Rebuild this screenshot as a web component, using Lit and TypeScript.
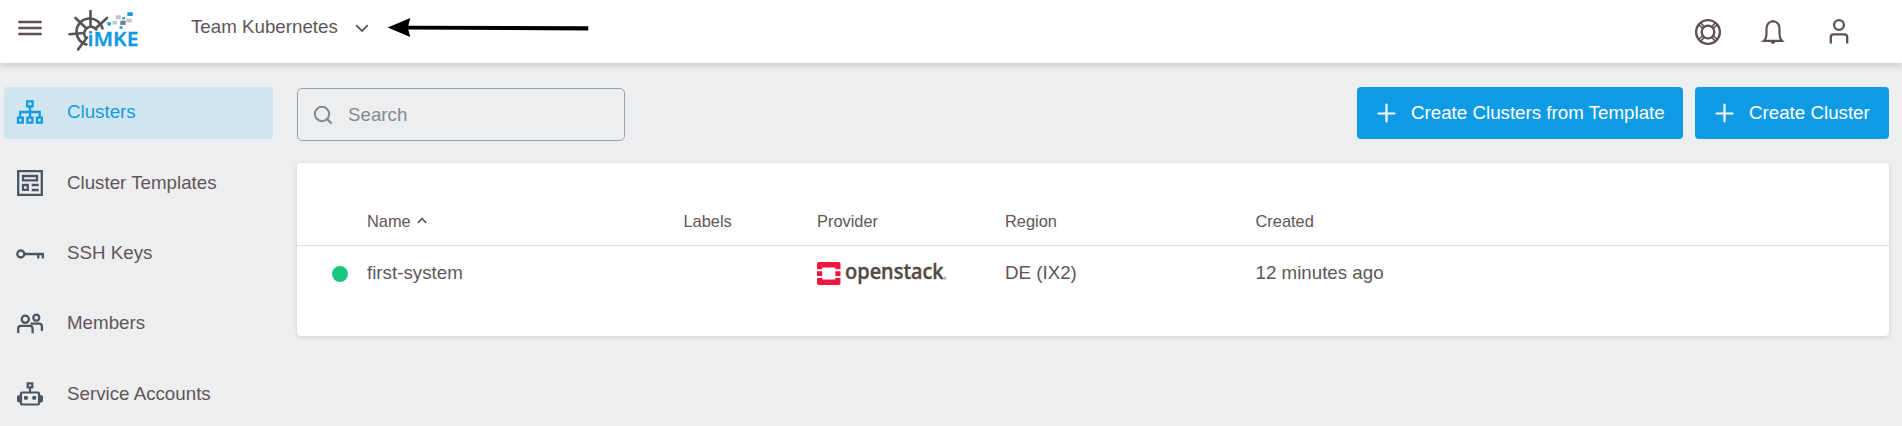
import { LitElement, html, css, svg } from "lit";
import { customElement } from "lit/decorators.js";

const sitemap = svg`<g fill="none" stroke="currentColor" stroke-width="2.300"><path d="M11.200 2.300h5.400v5h-5.400zM14 7.500v11M4.200 18.500v-5.500h19.500v5.500M2 18.700h4.800v5h-4.800zM11.400 18.700h5v5h-5zM21 18.700h4.900v5h-4.900z"/></g>`;
const template = svg`<g fill="none" stroke="currentColor" stroke-width="2.300"><path d="M2.200 2.200h23.600v23.600H2.200z"/><path d="M7 7h14v4.300H7zM7 16h4.800v4.800H7zM15.700 16h7M15.700 21h7"/></g>`;
const key = svg`<g fill="none" stroke="currentColor" stroke-width="2.300"><circle cx="4.800" cy="14" r="3.500"/><path d="M8.500 14h18.300v4.500M22.300 14v4.500"/></g>`;
const members = svg`<g fill="none" stroke="currentColor" stroke-width="2.300"><circle cx="9.300" cy="9.300" r="3.600"/><circle cx="20.300" cy="7.700" r="3"/><path d="M2.200 23v-4.500q0-2.700 2.700-2.700h9q2.700 0 2.700 2.700v4.700M14.500 13.700h8.700q2.700 0 2.700 2.800v4.500"/></g>`;
const robot = svg`<g fill="none" stroke="currentColor" stroke-width="2.200"><path d="M11.700 2.300h4.600v4h-4.600zM14 6.500v5M6 11.500h16q1 0 1 1v10q0 1-1 1H6q-1 0-1-1v-10q0-1 1-1z"/></g><g fill="currentColor"><path d="M1 16q0-2 3-2v7.500q-3 0-3-2zM27 16q0-2-3-2v7.500q3 0 3-2z"/><rect x="8" y="15" width="3.800" height="3.800" rx="1"/><rect x="16.300" y="15" width="3.800" height="3.800" rx="1"/></g>`;

const NAV = [
  { label: "Clusters", icon: sitemap, active: true },
  { label: "Cluster Templates", icon: template },
  { label: "SSH Keys", icon: key },
  { label: "Members", icon: members },
  { label: "Service Accounts", icon: robot },
];

const brand = html`<svg class="brand" width="80" height="48" viewBox="64 6 80 48">
  <g fill="none" stroke="#555" stroke-width="2.600" stroke-linecap="round">
    <path d="M86.500 44.500A13.200 13.200 0 1 1 102.500 28.500"/>
    <path d="M85.500 37.500A6.500 6.500 0 1 1 96.300 29.500"/>
    <path d="M90.500 11V26M75.500 18L86 28M107 18L95.500 28.500M69.500 34.200L84 33M78 49.500L87 37.500"/>
  </g>
  <g fill="#129ae2"><path d="M127.300 12.300h5.400v3.600h-5.400zM107.500 22.200h3.400v3.400h-3.400zM122.200 17.200h2.800v2h-2.800zM119.500 26.300h3v2.500h-3z"/></g>
  <g fill="#bfc5c8"><path d="M115.700 15.200h5v4h-5zM112.500 21h4.500v3.400h-4.500zM126.500 18.700h5.300v3.700h-5.300z"/></g>
  <path fill="#777d80" d="M120.300 20.700h5.300v4.200h-5.300z"/>
  <text x="87.500" y="45.800" font-family="Noto Sans, sans-serif" font-weight="600" font-size="20.500" textLength="51" lengthAdjust="spacingAndGlyphs" fill="#129ae2" stroke="#129ae2" stroke-width=".300">iMKE</text>
</svg>`;

const plus = html`<svg width="20" height="20" viewBox="0 0 20 20" fill="none" stroke="#fff" stroke-width="2.200" stroke-linecap="round"><path d="M9.500 1.500v17M1.500 10.500h16"/></svg>`;

@customElement("app-root")
export class AppRoot extends LitElement {
  static styles = css`
    :host { display: flex; flex-direction: column; height: 426px; overflow: hidden; background: #edeef0; color: #605558; font: 18.740px/24px "Liberation Sans", Arial, sans-serif; }
    svg { display: block; flex: none; }
    header { height: 63px; flex: none; display: flex; background: #fff; box-shadow: 0 2px 7px rgba(0,0,0,.17); z-index: 1; }
    .menu { margin: 20px 0 0 18px; }
    .brand { margin: 6px 0 0 22px; }
    .team { margin: 15px 0 0 47px; width: 148px; white-space: nowrap; }
    .chevron { margin: 24px 0 0 16px; }
    .arrow { margin: 16px 0 0 18px; }
    .tools { margin: 18px 49px 0 auto; display: flex; gap: 37px; }
    .tools svg:nth-child(-n+2) { margin-left: -1px; margin-right: 1px; }
    .body { display: flex; flex: 1; min-height: 0; }
    nav { width: 269px; margin: 24px 24px 0 4px; display: flex; flex-direction: column; gap: 18.500px; flex: none; }
    .item { height: 52px; flex: none; display: flex; align-items: center; gap: 23px; padding-left: 12px; border-radius: 3px; color: #4c565e; }
    .item svg { margin-top: -1px; }
    .item span { color: #605558; margin-top: -2px; }
    .item:nth-child(4) span { margin-top: -3px; }
    .active { background: #d1e5ee; color: #129ae2; }
    .active svg { margin-top: 0; }
    .item.active span { color: #129ae2; }
    main { flex: 1; margin: 24px 13px 0 0; min-width: 0; }
    .bar { display: flex; justify-content: space-between; }
    .search { width: 328px; height: 53px; margin-top: 1px; box-sizing: border-box; border: 1px solid #9ba1ab; border-radius: 5px; display: flex; align-items: center; padding-left: 14.500px; gap: 15.500px; color: #838b94; }
    .buttons { display: flex; gap: 12px; }
    .btn { height: 52px; box-sizing: border-box; background: #0f9be3; color: #fff; border-radius: 4px; display: flex; align-items: center; padding-left: 20px; gap: 14px; white-space: nowrap; }
    .btn span { margin-top: -1px; }
    .wide { width: 326px; }
    .narrow { width: 194px; }
    .card { height: 173px; box-sizing: border-box; margin-top: 22px; padding-top: 35px; background: #fff; border-radius: 4px; box-shadow: 0 1px 4px rgba(0,0,0,.15); }
    .row { display: grid; grid-template-columns: 35px 316.500px 133.500px 188px 250.500px 1fr; padding-left: 35px; align-items: center; height: 54px; }
    .head { height: 47px; border-bottom: 1px solid #dfe1e3; font-size: 16.400px; }
    .head > * { margin-top: -2px; }
    .name { display: flex; align-items: center; gap: 6px; }
    .dot { width: 16px; height: 16px; border-radius: 50%; background: #1cc680; margin-top: 1px; }
    .provider { margin-top: 2px; }
  `;

  render() {
    return html`
      <header>
        <svg class="menu" width="24" height="16" viewBox="0 0 24 16"><path d="M1.200 2h21.600M1.200 8h21.600M1.200 14h21.600" stroke="#5d5155" stroke-width="2.300" stroke-linecap="round"/></svg>
        ${brand}
        <div class="team">Team Kubernetes</div>
        <svg class="chevron" width="14" height="9" viewBox="0 0 14 9"><path d="M1.200 1.200L7 7L12.800 1.200" fill="none" stroke="#5d5155" stroke-width="1.800"/></svg>
        <svg class="arrow" width="202" height="24" viewBox="387 16 202 24"><path d="M387.700 27.600L410.300 18L408.300 25.700L588.300 26.300V30.500L408.300 29.400L410.300 37z" fill="#000"/></svg>
        <div class="tools">
          <svg width="28" height="28" viewBox="0 0 28 28" fill="none" stroke="#5d5155" stroke-width="2.300"><circle cx="14" cy="14" r="11.900"/><circle cx="14" cy="14" r="6.300"/><path d="M4.600 6.600L9 10.500M6.600 4.600L10.500 9M21.400 4.600L17.500 9M23.400 6.600L19 10.500M4.600 21.400L9 17.500M6.600 23.400L10.500 19M21.400 23.400L17.500 19M23.400 21.400L19 17.500" stroke-width="1.600"/></svg>
          <svg width="28" height="28" viewBox="0 0 28 28"><path d="M5 22.800Q7.500 20.500 7.500 15V10.500Q8 3.500 14 3.500T20.500 10.500V15Q20.500 20.500 23 22.800z" fill="none" stroke="#5d5155" stroke-width="2.200"/><path d="M11.300 3.500Q14 .500 16.700 3.500zM11.300 23.500Q14 28.500 16.700 23.500z" fill="#5d5155"/></svg>
          <svg width="28" height="28" viewBox="0 0 28 28" fill="none" stroke="#5d5155" stroke-width="2.300"><circle cx="14" cy="7" r="4.900"/><path d="M5.800 25.500V19Q5.800 16.300 8.500 16.300H19.500Q22.200 16.300 22.200 19V25.500"/></svg>
        </div>
      </header>
      <div class="body">
        <nav>
          ${NAV.map((n) => html`<div class="item ${n.active ? "active" : ""}"><svg width="28" height="28" viewBox="0 0 28 28">${n.icon}</svg><span>${n.label}</span></div>`)}
        </nav>
        <main>
          <div class="bar">
            <div class="search">
              <svg width="20" height="20" viewBox="0 0 20 20" fill="none" stroke="currentColor" stroke-width="2.100"><circle cx="9" cy="9" r="7.200"/><path d="M14 14L18.500 18.500" stroke-width="2.400"/></svg>
              <span>Search</span>
            </div>
            <div class="buttons">
              <div class="btn wide">${plus}<span>Create Clusters from Template</span></div>
              <div class="btn narrow">${plus}<span>Create Cluster</span></div>
            </div>
          </div>
          <section class="card">
            <div class="row head">
              <span></span>
              <span class="name">Name <svg width="10" height="7" viewBox="0 0 10 7"><path d="M.800 6L5 1.500L9.200 6" fill="none" stroke="#5d5155" stroke-width="1.600"/></svg></span>
              <span>Labels</span><span>Provider</span><span>Region</span><span>Created</span>
            </div>
            <div class="row">
              <span class="dot"></span><span>first-system</span><span></span>
              <svg class="provider" width="132" height="28" viewBox="817 260 132 28">
                <path fill="#ee1742" d="M819 262H838.500Q840.500 262 840.500 264V269.300H835.300V268.300Q835.300 267.500 834.500 267.500H823Q822.200 267.500 822.200 268.300V269.300H817V264Q817 262 819 262zM817 271.200H822.200V275.900H817zM835.300 271.200H840.500V275.900H835.300zM817 277.900H822.200V278.700Q822.200 279.500 823 279.500H834.500Q835.300 279.500 835.300 278.700V277.900H840.500V283Q840.500 285 838.500 285H819Q817 285 817 283z"/>
                <text x="845" y="279.300" font-family="Noto Sans, sans-serif" font-weight="500" font-size="21.500" textLength="98.500" lengthAdjust="spacingAndGlyphs" fill="#51483f" stroke="#51483f" stroke-width=".450">openstack</text>
                <circle cx="944.900" cy="278.200" r="1" fill="none" stroke="#888" stroke-width=".800"/>
              </svg>
              <span>DE (IX2)</span><span>12 minutes ago</span>
            </div>
          </section>
        </main>
      </div>`;
  }
}
